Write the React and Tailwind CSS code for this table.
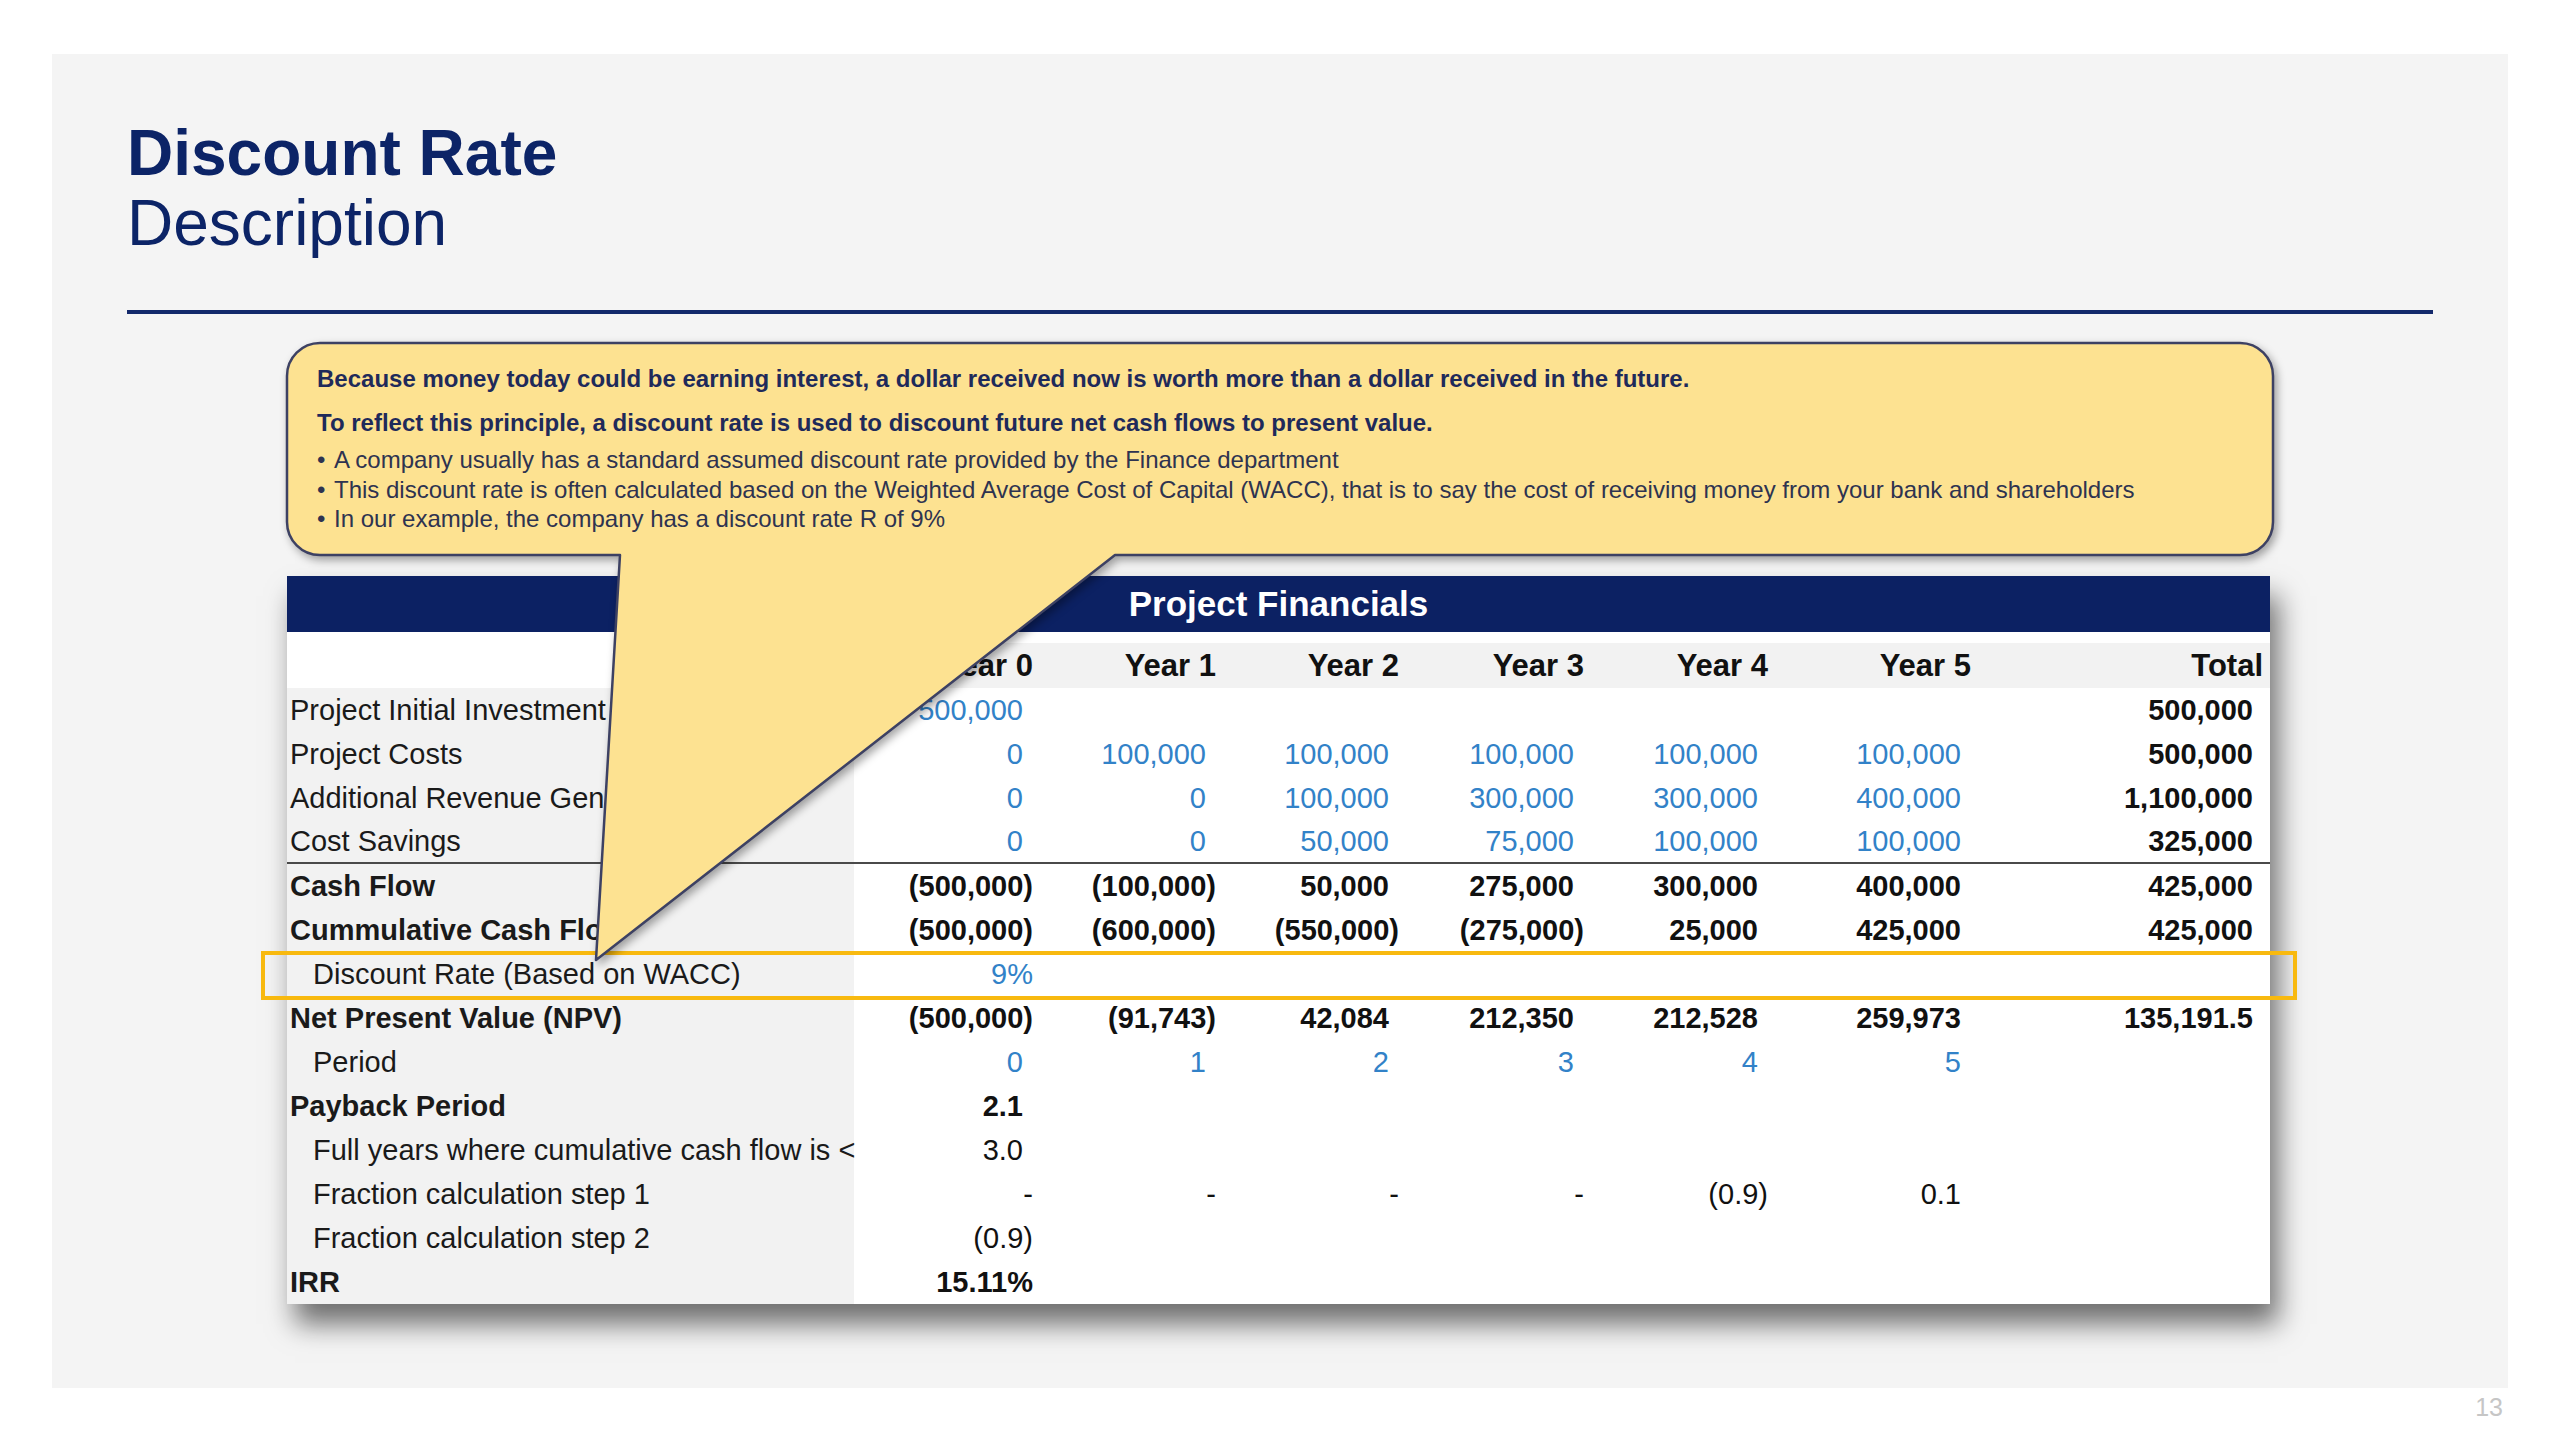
const COLS = "grid grid-cols-[567px_179px_183px_183px_185px_184px_203px_292px]";

const rows = [
  { label: "Project Initial Investment", blue: true, vals: ["500,000", "", "", "", "", ""], total: "500,000" },
  { label: "Project Costs", blue: true, vals: ["0", "100,000", "100,000", "100,000", "100,000", "100,000"], total: "500,000" },
  { label: "Additional Revenue Generated", blue: true, vals: ["0", "0", "100,000", "300,000", "300,000", "400,000"], total: "1,100,000" },
  { label: "Cost Savings", blue: true, rule: true, vals: ["0", "0", "50,000", "75,000", "100,000", "100,000"], total: "325,000" },
  { label: "Cash Flow", bold: true, vals: ["(500,000)", "(100,000)", "50,000", "275,000", "300,000", "400,000"], total: "425,000" },
  { label: "Cummulative Cash Flow", bold: true, vals: ["(500,000)", "(600,000)", "(550,000)", "(275,000)", "25,000", "425,000"], total: "425,000" },
  { label: "Discount Rate (Based on WACC)", indent: true, blue: true, vals: ["9%", "", "", "", "", ""], total: "" },
  { label: "Net Present Value (NPV)", bold: true, vals: ["(500,000)", "(91,743)", "42,084", "212,350", "212,528", "259,973"], total: "135,191.5" },
  { label: "Period", indent: true, blue: true, vals: ["0", "1", "2", "3", "4", "5"], total: "" },
  { label: "Payback Period", bold: true, vals: ["2.1", "", "", "", "", ""], total: "" },
  { label: "Full years where cumulative cash flow is <", indent: true, vals: ["3.0", "", "", "", "", ""], total: "" },
  { label: "Fraction calculation step 1", indent: true, vals: ["-", "-", "-", "-", "(0.9)", "0.1"], total: "" },
  { label: "Fraction calculation step 2", indent: true, vals: ["(0.9)", "", "", "", "", ""], total: "" },
  { label: "IRR", bold: true, vals: ["15.11%", "", "", "", "", ""], total: "" },
];

// accounting style: positives leave room for the closing paren
const padFor = (v) => {
  if (v.endsWith(")") || v.endsWith("%") || v === "-") return "pr-0";
  return "pr-[10px]";
};

const bullets = [
  "A company usually has a standard assumed discount rate provided by the Finance department",
  "This discount rate is often calculated based on the Weighted Average Cost of Capital (WACC), that is to say the cost of receiving money from your bank and shareholders",
  "In our example, the company has a discount rate R of 9%",
];

const Callout = () => (
  <div className="relative z-10 ml-[160px] mt-[29px] w-[1986px] h-[212px]">
    {/* box + pointer drawn as one shape */}
    <svg
      className="absolute left-0 top-0 overflow-visible drop-shadow-[3px_4px_4px_rgba(0,0,0,0.35)]"
      width="1986"
      height="620"
      viewBox="0 0 1986 620"
    >
      <path
        d="M33,0 H1953 A33,33 0 0 1 1986,33 V179 A33,33 0 0 1 1953,212 H828 L309,617 L333,212 H33 A33,33 0 0 1 0,179 V33 A33,33 0 0 1 33,0 Z"
        fill="#fde291"
        stroke="#3d4163"
        strokeWidth="2.5"
        strokeLinejoin="round"
      />
    </svg>
    <div className="relative pl-[30px] pt-[22px] text-[#1f2a5a]">
      <p className="text-[24px] leading-[28px] font-bold">
        Because money today could be earning interest, a dollar received now is worth more than a dollar received in the future.
      </p>
      <p className="mt-[16px] text-[24px] leading-[28px] font-bold">
        To reflect this principle, a discount rate is used to discount future net cash flows to present value.
      </p>
      <ul className="mt-[8px] text-[24px] leading-[29.5px] text-[#2e3350]">
        {bullets.map((b) => (
          <li key={b} className="flex">
            <span className="w-[17px] shrink-0">•</span>
            <span>{b}</span>
          </li>
        ))}
      </ul>
    </div>
  </div>
);

const FinancialsTable = () => (
  <div className="relative ml-[160px] mt-[21px] w-[1983px] bg-white shadow-[8px_20px_26px_rgba(0,0,0,0.55)]">
    <div className="h-[56px] bg-[#0c2163] flex items-center justify-center text-white text-[35px] font-bold">
      Project Financials
    </div>
    <div className="h-[11px]" />

    {/* column headings */}
    <div className={`${COLS} h-[45px] pr-[7px] bg-[#f2f2f2] text-[31px] leading-[45px] font-bold text-[#111]`}>
      <div className="bg-white" />
      {["Year 0", "Year 1", "Year 2", "Year 3", "Year 4", "Year 5", "Total"].map((h) => (
        <div key={h} className="text-right">{h}</div>
      ))}
    </div>

    {rows.map((r) => (
      <div
        key={r.label}
        className={`${COLS} h-[44px] pr-[7px] text-[29px] ${r.rule ? "border-b-2 border-[#4a4a4a] leading-[42px]" : "leading-[44px]"} ${r.bold ? "font-bold" : ""}`}
      >
        <div className={`bg-[#f2f2f2] whitespace-nowrap text-[#1a1a1a] ${r.indent ? "pl-[26px]" : "pl-[3px]"}`}>
          {r.label}
        </div>
        {r.vals.map((v, i) => (
          <div key={i} className={`text-right ${padFor(v)} ${r.blue ? "text-[#3282c8]" : "text-[#111]"}`}>
            {v}
          </div>
        ))}
        <div className={`text-right font-bold text-[#111] ${padFor(r.total)}`}>{r.total}</div>
      </div>
    ))}

    {/* highlight around the discount rate row */}
    <div className="absolute left-[-26px] top-[375px] w-[2036px] h-[49px] border-4 border-[#f8b90f] pointer-events-none" />
  </div>
);

export default function App() {
  return (
    <div className="w-[2560px] h-[1440px] bg-white pt-[54px] pl-[52px] font-['Liberation_Sans',Arial,sans-serif]">
      <div className="w-[2456px] h-[1334px] bg-[#f4f4f4] pl-[75px] pt-[64px]">
        <h1 className="text-[64px] leading-[70px] font-bold text-[#0c2467]">Discount Rate</h1>
        <div className="text-[64px] leading-[70px] text-[#0c2467]">Description</div>
        <div className="mt-[52px] h-[4px] w-[2306px] bg-[#13296b]" />

        <Callout />
        <FinancialsTable />
      </div>
      <div className="w-[2451px] mt-[4px] text-right text-[25px] leading-[30px] text-[#c6c6c6]">13</div>
    </div>
  );
}
